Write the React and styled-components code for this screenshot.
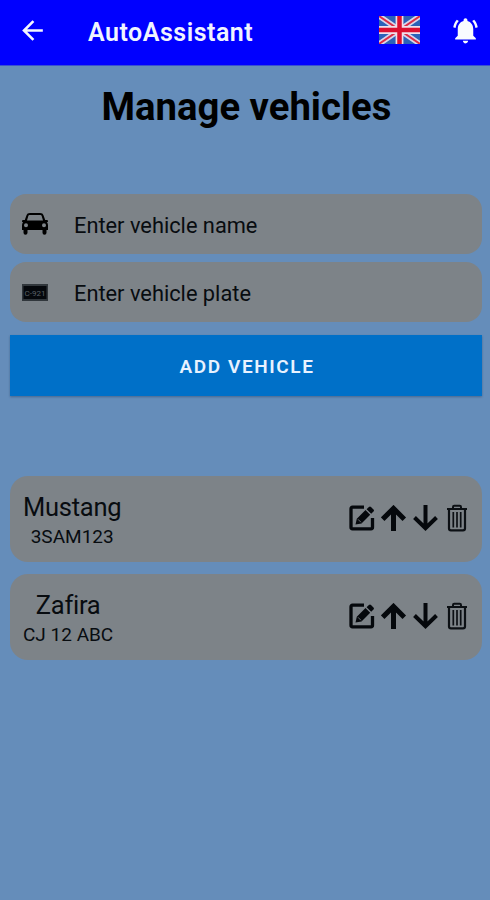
import React from "react";
import styled, { createGlobalStyle } from "styled-components";

const vehicles = [
  { name: "Mustang", plate: "3SAM123" },
  { name: "Zafira", plate: "CJ 12 ABC" },
];

const BackIcon = () => (
  <svg width="31" height="31" viewBox="0 0 24 24" fill="#f4f6ff">
    <path d="M20 11H7.83l5.59-5.59L12 4l-8 8 8 8 1.41-1.41L7.83 13H20v-2z" />
  </svg>
);

const FlagIcon = () => (
  <svg width="41" height="28" viewBox="0 0 42 28" preserveAspectRatio="none">
    <rect width="42" height="28" fill="#2b62b8" />
    <path d="M0 0L42 28M42 0L0 28" stroke="#d9d6ea" strokeWidth="5.500" />
    <path d="M0 0L42 28M42 0L0 28" stroke="#dc2c48" strokeWidth="1.900" />
    <path d="M21 0V28M0 14H42" stroke="#f0dfea" strokeWidth="8" />
    <path d="M21 0V28M0 14H42" stroke="#dc1030" strokeWidth="4.600" />
  </svg>
);

const BellIcon = () => (
  <svg width="31" height="31" viewBox="0 0 24 24" fill="#f8fcff">
    <path d="M6.800 4.600L5.300 3.600C3.900 5 3 7 2.500 9.500l1.800.5C4.700 7.800 5.500 6 6.800 4.600z" />
    <path d="M17.200 4.600L18.700 3.600C20.100 5 21 7 21.500 9.500l-1.800.5C19.300 7.800 18.500 6 17.200 4.600z" />
    <path d="M18 11c0-3.07-1.64-5.64-4.5-6.32V4c0-.83-.67-1.5-1.5-1.5s-1.5.67-1.5 1.5v.68C7.63 5.36 6 7.92 6 11v5l-2 2v1h16v-1l-2-2v-5zm-6 11c.14 0 .27-.01.4-.04.65-.14 1.18-.58 1.44-1.18.1-.24.15-.5.15-.78h-4c.01 1.1.9 2 2.01 2z" />
  </svg>
);

const CarIcon = () => (
  <svg width="26" height="22" viewBox="0 0 26 22">
    <path
      fillRule="evenodd"
      d="M8 0h10c2 0 3 .8 3.600 2.500L23.200 7h1.300c1 0 1.500.6 1.500 1.200S25.500 9.300 24.800 9.300c.8.800 1.200 1.700 1.200 2.900V17h-1.500v2.800a2 2 0 0 1-4 0V17h-15v2.800a2 2 0 0 1-4 0V17H0v-4.800c0-1.200.4-2.100 1.200-2.900C.5 9.300 0 8.800 0 8.200S.5 7 1.500 7h1.300l1.600-4.500C5 .8 6 0 8 0zM7.900 2C7 2 6.600 2.300 6.300 3.100L5 7.600h16l-1.300-4.500C19.400 2.300 19 2 18.100 2zM4 10.300a2 2 0 1 0 0 4 2 2 0 0 0 0-4zm18 0a2 2 0 1 0 0 4 2 2 0 0 0 0-4z"
    />
  </svg>
);

const PlateIcon = () => (
  <svg width="26" height="17" viewBox="0 0 26 17">
    <rect width="26" height="17" fill="#31373c" />
    <rect x="1.500" y="2" width="23" height="13" fill="#05080c" />
    <text x="13" y="11.600" textAnchor="middle" fontSize="8" fontFamily="Roboto, sans-serif" fill="#596067">
      C-921
    </text>
  </svg>
);

const EditIcon = () => (
  <svg width="26" height="26" viewBox="0 0 26 26">
    <path
      d="M15 2.200H3.500Q2 2.200 2 3.700V22.300Q2 23.800 3.500 23.800H22Q23.500 23.800 23.500 22.300V13"
      fill="none"
      stroke="#05080c"
      strokeWidth="3.300"
    />
    <path
      fill="#05080c"
      d="M6.500 19.500L7.800 13.800 16.500 5.100 21.200 9.800 12.500 18.500zM17.600 4.200L19.900 1.900Q21 .9 22 1.900L24.500 4.400Q25.500 5.400 24.500 6.500L22.200 8.800z"
    />
    <path d="M9 14.300L12 17.300" stroke="#7d8388" strokeWidth=".8" />
  </svg>
);

const ArrowIcon = ({ down }) => (
  <svg width="26" height="26" viewBox="0 0 26 26" fill="none" stroke="#05080c" strokeWidth={down ? 4 : 5}>
    {down ? <path d="M12.500 0V23.500M1.500 12.500L12.500 23.200 23.500 12.500" /> : <path d="M12.500 26V4M1.700 14.200L12.500 3.400 23.300 14.200" />}
  </svg>
);

const TrashIcon = () => (
  <svg width="20" height="28" viewBox="0 0 20 28" fill="none" stroke="#0c1014">
    <path d="M0 5H20M6 4.800V3Q6 1.700 7.300 1.700H12.700Q14 1.700 14 3V4.800" strokeWidth="2" />
    <path d="M2 5V24.500Q2 26.300 4 26.300H16Q18 26.300 18 24.500V5" strokeWidth="2.200" />
    <path d="M6.300 8V23.500M10 8V23.500M13.700 8V23.500" strokeWidth="1.700" />
  </svg>
);

const App = () => {
  return (
    <>
      <GlobalStyle />
      <Header>
        <BackIcon />
        <AppName>AutoAssistant</AppName>
        <FlagIcon />
        <BellIcon />
      </Header>
      <Container>
        <Title>Manage vehicles</Title>
        <Form>
          <Field>
            <CarIcon />
            <Placeholder>Enter vehicle name</Placeholder>
          </Field>
          <Field>
            <PlateIcon />
            <Placeholder>Enter vehicle plate</Placeholder>
          </Field>
          <AddButton>Add vehicle</AddButton>
        </Form>
        <List>
          {vehicles.map((vehicle) => (
            <Card key={vehicle.plate}>
              <Info>
                <Name>{vehicle.name}</Name>
                <Plate>{vehicle.plate}</Plate>
              </Info>
              <Actions>
                <EditIcon />
                <ArrowIcon />
                <ArrowIcon down />
                <TrashIcon />
              </Actions>
            </Card>
          ))}
        </List>
      </Container>
    </>
  );
};

export default App;

const GlobalStyle = createGlobalStyle`
  * {
    box-sizing: border-box;
  }
  body {
    margin: 0;
    background: #658dba;
    font-family: Roboto, sans-serif;
    color: #080c10;
  }
  svg {
    display: block;
    flex-shrink: 0;
  }
`;

const Header = styled.header`
  height: 66px;
  padding: 0 9px 5px 17px;
  display: flex;
  align-items: center;
  background: #0000ff;
  border-bottom: 1px solid #3a50d0;

  svg:nth-of-type(2) {
    margin-right: 30px;
  }
`;

const AppName = styled.div`
  flex: 1;
  margin: 5px 0 0 40px;
  color: #f0f4ff;
  font-size: 25px;
  font-weight: 600;
  letter-spacing: 0.5px;
`;

const Container = styled.main`
  padding: 18px 8px 0 10px;
`;

const Title = styled.h1`
  margin: 0;
  padding: 1px 0 0 1px;
  text-align: center;
  color: #000;
  font-size: 38.3px;
  line-height: 43px;
  font-weight: 700;
  white-space: nowrap;
`;

const Form = styled.div`
  margin-top: 66px;
`;

const Field = styled.div`
  height: 60px;
  margin-bottom: 8px;
  padding: 0 12px;
  display: flex;
  align-items: center;
  gap: 26px;
  border-radius: 16px;
  background: #7d8388;
`;

const Placeholder = styled.span`
  font-size: 21.8px;
  margin-top: 2px;
`;

const AddButton = styled.button`
  display: block;
  width: 100%;
  height: 61px;
  margin-top: 13px;
  padding: 2px 0 0 2px;
  border: 0;
  background: #0070c8;
  color: #e8f2ff;
  font-family: inherit;
  font-size: 19px;
  font-weight: 600;
  letter-spacing: 1.6px;
  text-transform: uppercase;
  box-shadow: 0 1px 2px rgba(30, 50, 80, 0.4);
`;

const List = styled.div`
  margin-top: 80px;
  display: flex;
  flex-direction: column;
  gap: 12px;
`;

const Card = styled.div`
  height: 86px;
  padding: 0 15px 1px 13px;
  display: flex;
  align-items: center;
  justify-content: space-between;
  border-radius: 18px;
  background: #7d8388;
`;

const Info = styled.div`
  display: flex;
  flex-direction: column;
  align-items: center;
  padding-top: 5px;
`;

const Name = styled.div`
  font-size: 25.5px;
  line-height: 31px;
  letter-spacing: -0.25px;
`;

const Plate = styled.div`
  font-size: 19px;
  line-height: 27px;
`;

const Actions = styled.div`
  display: flex;
  align-items: center;
  gap: 6px;
  margin-bottom: 1px;

  svg:last-child {
    margin-left: 2px;
  }
`;
